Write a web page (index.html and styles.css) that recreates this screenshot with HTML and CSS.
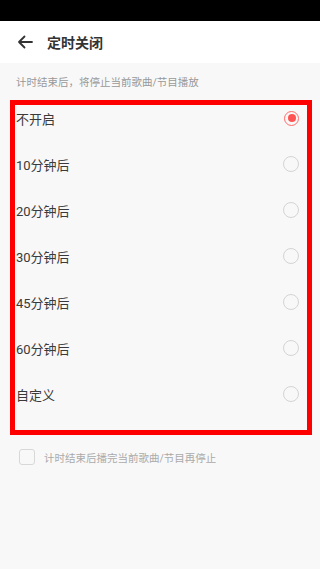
FILE: index.html
```html
<!doctype html>
<html lang="zh-CN">

<head>
    <meta charset="utf-8">
    <meta name="viewport" content="width=device-width, initial-scale=1">
    <title>定时关闭</title>

    <link rel="stylesheet" href="styles.css">
</head>

<body>
    <div class="status_bar"></div>

    <header class="top_bar">
        <svg class="back_icon" width="16" height="14" viewBox="0 0 16 14">
            <path d="M15 7H2M7.5 1.5L2 7l5.5 5.5" fill="none" stroke="#333" stroke-width="1.8" stroke-linecap="round" stroke-linejoin="round"/>
        </svg>
        <h1>定时关闭</h1>
    </header>

    <main class="page">
        <p class="hint">计时结束后，将停止当前歌曲/节目播放</p>

        <div class="options">
            <div class="option">
                <span>不开启</span>
                <span class="radio checked"></span>
            </div>
            <div class="option">
                <span>10分钟后</span>
                <span class="radio"></span>
            </div>
            <div class="option">
                <span>20分钟后</span>
                <span class="radio"></span>
            </div>
            <div class="option">
                <span>30分钟后</span>
                <span class="radio"></span>
            </div>
            <div class="option">
                <span>45分钟后</span>
                <span class="radio"></span>
            </div>
            <div class="option">
                <span>60分钟后</span>
                <span class="radio"></span>
            </div>
            <div class="option">
                <span>自定义</span>
                <span class="radio"></span>
            </div>
        </div>

        <label class="finish_song">
            <span class="checkbox"></span>
            <span>计时结束后播完当前歌曲/节目再停止</span>
        </label>

        <div class="highlight"></div>
    </main>
</body>

</html>
```

FILE: styles.css
```css
/* Timer close page */
body {
    font-family: Roboto, "Noto Sans CJK SC", sans-serif;
    background-color: #f8f8f8;
    margin: 0;
    padding: 0;
    height: 569px;
    overflow: hidden;
}

.status_bar {
    height: 21px;
    background-color: #000;
}

.top_bar {
    height: 42px;
    background-color: #fff;
    display: flex;
    align-items: center;
    padding-left: 17px;
}

.back_icon {
    display: block;
}

.top_bar h1 {
    margin: 0 0 0 14px;
    font-size: 14px;
    font-weight: bold;
    color: #333;
}

.page {
    position: relative;
}

.hint {
    margin: 0;
    height: 32px;
    line-height: 40px;
    padding-left: 16px;
    font-size: 10.5px;
    color: #999;
}

.option {
    height: 46px;
    display: flex;
    align-items: center;
    justify-content: space-between;
    padding: 0 21px 0 16px;
    font-size: 13px;
    color: #3a3a3a;
}

.radio {
    width: 14px;
    height: 14px;
    border: 1px solid #d4d4d4;
    border-radius: 50%;
    box-sizing: content-box;
    position: relative;
}

.radio.checked {
    border: 1.5px solid #ff6b6b;
    width: 13px;
    height: 13px;
}

.radio.checked::after {
    content: "";
    position: absolute;
    left: 2.5px;
    top: 2.5px;
    width: 8px;
    height: 8px;
    border-radius: 50%;
    background-color: #ff5252;
}

.finish_song {
    display: flex;
    align-items: center;
    margin-top: 32px;
    padding-left: 19px;
    font-size: 10.5px;
    color: #aaa;
}

.checkbox {
    width: 14px;
    height: 14px;
    border: 1px solid #d8d8d8;
    border-radius: 3px;
    margin-right: 9px;
}

.highlight {
    position: absolute;
    left: 10px;
    top: 37px;
    width: 292px;
    height: 325px;
    border: 5px solid #ff0000;
    pointer-events: none;
}
```
